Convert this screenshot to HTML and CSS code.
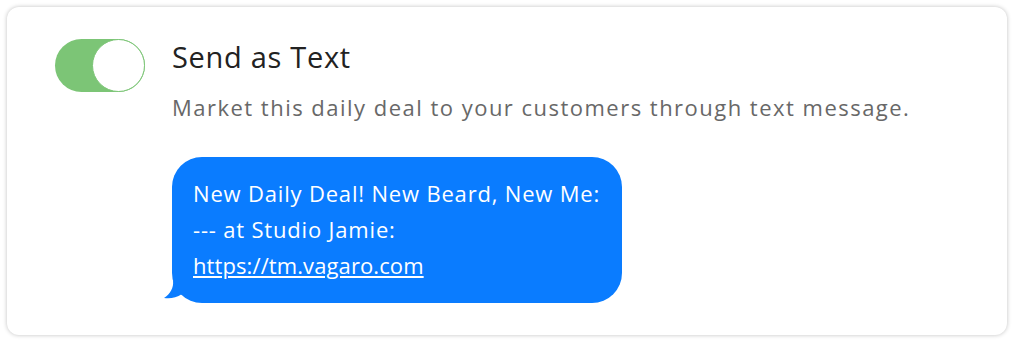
FILE: index.html
```html
<!DOCTYPE html>
<html lang="en">
<head>
    <meta charset="UTF-8">
    <title>Send as Text</title>
    <link rel="stylesheet" href="styles.css">
</head>
<body>
    <div class="card">
        <div class="toggle on">
            <span class="knob"></span>
        </div>
        <div class="info">
            <h2 class="title">Send as Text</h2>
            <p class="desc">Market this daily deal to your customers through text message.</p>
            <div class="bubble">
                New Daily Deal! New Beard, New Me:<br>
                --- at Studio Jamie:<br>
                <a href="#">https://tm.vagaro.com</a>
                <svg class="tail" width="18" height="20" viewBox="0 0 18 20">
                    <path d="M9 0 C10 8 6 14 0 18 C6 19 12 18 18 14 Z" fill="#0a7cff"/>
                </svg>
            </div>
        </div>
    </div>
</body>
</html>
```

FILE: styles.css
```css
body {
    margin: 0;
    background: #ffffff;
    font-family: "Open Sans", sans-serif;
}

.card {
    margin: 7px 8px 8px 7px;
    height: 328px;
    box-sizing: border-box;
    background: #ffffff;
    border-radius: 12px;
    box-shadow: 0 0 4px rgba(0, 0, 0, 0.25);
    display: flex;
    padding: 32px 48px;
}

.toggle {
    flex: none;
    width: 90px;
    height: 53px;
    border-radius: 27px;
    background: #7cc576;
    display: flex;
    justify-content: flex-end;
    box-sizing: border-box;
}

.knob {
    width: 53px;
    height: 53px;
    border-radius: 50%;
    background: #ffffff;
    border: 1px solid #7cc576;
    box-sizing: border-box;
}

.info {
    margin-left: 27px;
}

.title {
    margin: 0;
    font-size: 29px;
    line-height: 36px;
    font-weight: 400;
    letter-spacing: 0.7px;
    color: #222222;
}

.desc {
    margin: 17px 0 0;
    font-size: 22px;
    line-height: 30px;
    letter-spacing: 1.48px;
    color: #686868;
    white-space: nowrap;
}

.bubble {
    position: relative;
    margin-top: 35px;
    width: 450px;
    height: 146px;
    box-sizing: border-box;
    padding: 18px 21px 0;
    background: #0a7cff;
    color: #ffffff;
    border-radius: 30px;
    font-size: 22px;
    font-weight: 500;
    line-height: 36px;
    letter-spacing: 0.82px;
    white-space: nowrap;
}

.bubble a {
    color: #ffffff;
    letter-spacing: 0.1px;
}

.tail {
    position: absolute;
    left: -8px;
    bottom: 3px;
}
```
